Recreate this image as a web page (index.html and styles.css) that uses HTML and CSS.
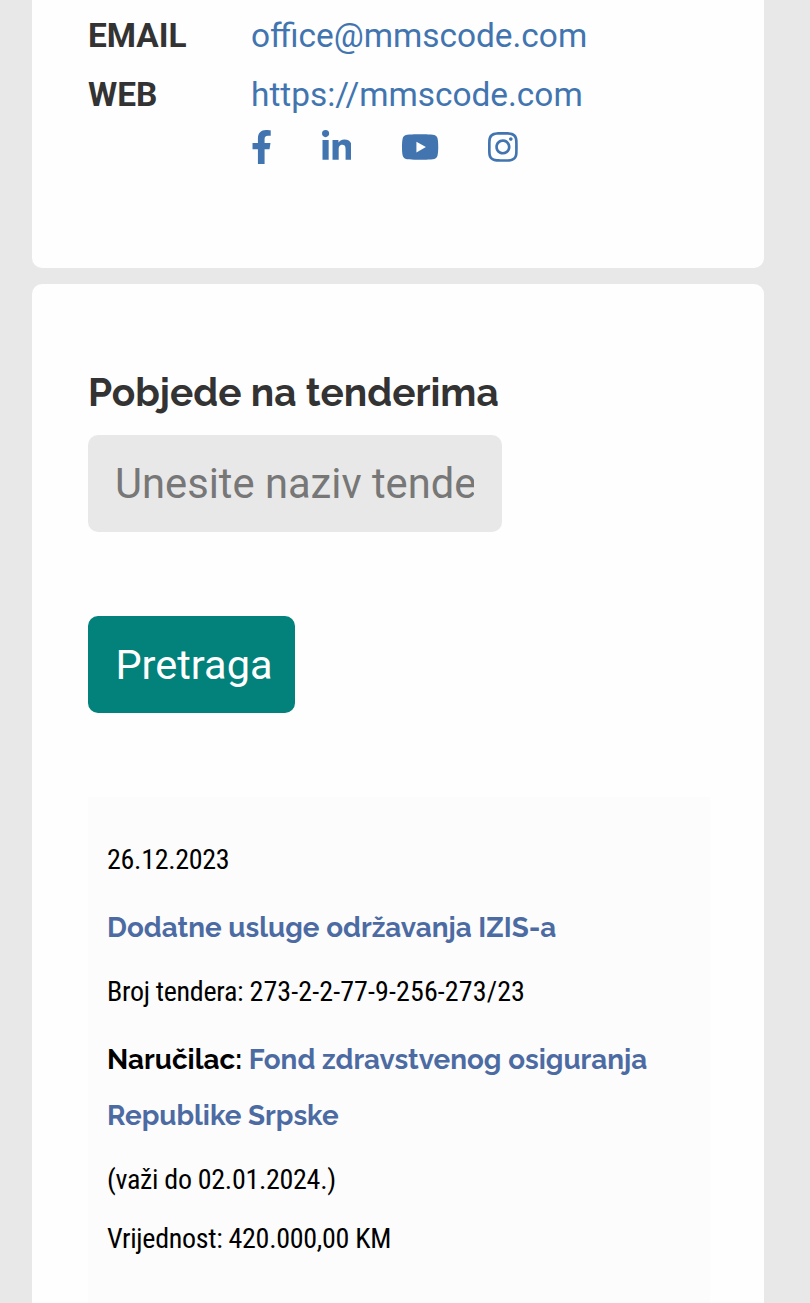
FILE: index.html
```
<!DOCTYPE html>
<html lang="bs">
<head>
    <meta charset="UTF-8">
    <meta name="viewport" content="width=device-width, initial-scale=1.0">
    <title>Pobjede na tenderima</title>
    <link rel="stylesheet" href="styles.css">
</head>
<body>
    <div class="card contact">
        <div class="row">
            <div class="label">EMAIL</div>
            <a href="mailto:office@mmscode.com">office@mmscode.com</a>
        </div>
        <div class="row">
            <div class="label">WEB</div>
            <a href="https://mmscode.com">https://mmscode.com</a>
        </div>
        <div class="social">
            <a href="#" aria-label="Facebook"><svg viewBox="0 0 320 512"><path d="M279.14 288l14.22-92.66h-88.91v-60.13c0-25.35 12.42-50.06 52.24-50.06h40.42V6.26S260.43 0 225.36 0c-73.22 0-121.08 44.38-121.08 124.72v70.62H22.89V288h81.39v224h100.17V288z"/></svg></a>
            <a href="#" aria-label="LinkedIn"><svg viewBox="0 0 448 512"><path d="M100.28 448H7.4V148.9h92.88zM53.79 108.1C24.09 108.1 0 83.5 0 53.8a53.79 53.79 0 0 1 107.58 0c0 29.7-24.1 54.3-53.79 54.3zM447.9 448h-92.68V302.4c0-34.7-.7-79.2-48.29-79.2-48.29 0-55.69 37.7-55.69 76.7V448h-92.78V148.9h89.08v40.8h1.3c12.4-23.5 42.69-48.3 87.88-48.3 94 0 111.28 61.9 111.28 142.3V448z"/></svg></a>
            <a href="#" aria-label="YouTube"><svg viewBox="0 0 576 512"><path d="M549.655 124.083c-6.281-23.65-24.787-42.276-48.284-48.597C458.781 64 288 64 288 64S117.22 64 74.629 75.486c-23.497 6.322-42.003 24.947-48.284 48.597-11.412 42.867-11.412 132.305-11.412 132.305s0 89.438 11.412 132.305c6.281 23.65 24.787 41.5 48.284 47.821C117.22 448 288 448 288 448s170.78 0 213.371-11.486c23.497-6.321 42.003-24.171 48.284-47.821 11.412-42.867 11.412-132.305 11.412-132.305s0-89.438-11.412-132.305zm-317.51 213.508V175.185l142.739 81.205-142.739 81.201z"/></svg></a>
            <a href="#" aria-label="Instagram"><svg viewBox="0 0 448 512"><path d="M224.1 141c-63.6 0-114.9 51.3-114.9 114.9s51.3 114.9 114.9 114.9S339 319.5 339 255.9 287.7 141 224.1 141zm0 189.6c-41.1 0-74.7-33.5-74.7-74.7s33.5-74.7 74.7-74.7 74.7 33.5 74.7 74.7-33.6 74.7-74.7 74.7zm146.4-194.3c0 14.9-12 26.8-26.8 26.8-14.9 0-26.8-12-26.8-26.8s12-26.8 26.8-26.8 26.8 12 26.8 26.8zm76.1 27.2c-1.7-35.9-9.9-67.7-36.2-93.9-26.2-26.2-58-34.4-93.9-36.2-37-2.1-147.9-2.1-184.9 0-35.8 1.7-67.6 9.9-93.9 36.1s-34.4 58-36.2 93.9c-2.1 37-2.1 147.9 0 184.9 1.7 35.9 9.9 67.7 36.2 93.9s58 34.4 93.9 36.2c37 2.1 147.9 2.1 184.9 0 35.9-1.7 67.7-9.9 93.9-36.2 26.2-26.2 34.4-58 36.2-93.9 2.1-37 2.1-147.8 0-184.8zM398.8 388c-7.8 19.6-22.9 34.7-42.6 42.6-29.5 11.7-99.5 9-132.1 9s-102.7 2.6-132.1-9c-19.6-7.8-34.7-22.9-42.6-42.6-11.7-29.5-9-99.5-9-132.1s-2.6-102.7 9-132.1c7.8-19.6 22.9-34.7 42.6-42.6 29.5-11.7 99.5-9 132.1-9s102.7-2.6 132.1 9c19.6 7.8 34.7 22.9 42.6 42.6 11.7 29.5 9 99.5 9 132.1s2.7 102.7-9 132.1z"/></svg></a>
        </div>
    </div>

    <div class="card tenders">
        <h2>Pobjede na tenderima</h2>
        <input type="text" class="search" placeholder="Unesite naziv tendera">
        <button class="btn">Pretraga</button>

        <div class="tender">
            <p>26.12.2023</p>
            <h3><a href="#">Dodatne usluge održavanja IZIS-a</a></h3>
            <p>Broj tendera: <span class="number">273-2-2-77-9-256-273/23</span></p>
            <h3>Naručilac: <a href="#">Fond zdravstvenog osiguranja</a><br><a href="#">Republike Srpske</a></h3>
            <p>(važi do 02.01.2024.)</p>
            <p>Vrijednost: 420.000,00 KM</p>
        </div>
    </div>
</body>
</html>
```

FILE: styles.css
```
* {
    box-sizing: border-box;
}
body {
    margin: 0;
    padding: 0 46px 0 32px;
    background-color: #e8e8e8;
    font-family: Roboto, sans-serif;
    color: #333;
}
a {
    color: #4275b0;
    text-decoration: none;
}
.card {
    background: #fefefe;
    border-radius: 10px;
    padding: 0 56px;
}
.contact {
    height: 267.5px;
    padding-top: 6px;
    border-radius: 0 0 10px 10px;
    margin-bottom: 16px;
}
.row {
    display: flex;
    font-size: 33.4px;
    line-height: 59px;
}
.label {
    width: 163px;
    font-weight: bold;
}
.social {
    display: flex;
    align-items: center;
    margin-left: 163px;
    height: 46px;
}
.social a {
    display: flex;
    margin-right: 49.3px;
}
.social svg {
    height: 34px;
    fill: #4275b0;
}
.tenders {
    height: 1019.5px;
    padding-top: 84.5px;
    border-radius: 10px 10px 0 0;
}
h2, h3 {
    font-family: Raleway, Lato, sans-serif;
    font-weight: bold;
    margin: 0;
}
h2 {
    font-size: 38.8px;
    line-height: 50px;
    margin-bottom: 17px;
}
.search {
    display: block;
    width: 414px;
    height: 97px;
    padding: 0 28px 0 27px;
    border: none;
    border-radius: 10px;
    background: #e8e8e8;
    font: 41.7px Roboto, sans-serif;
}
.search::placeholder {
    color: #777;
}
.btn {
    display: block;
    width: 207px;
    height: 97px;
    margin: 84px 0;
    padding: 0 0 1px 5px;
    border: none;
    border-radius: 10px;
    background: #02827b;
    color: #fff;
    font: 41.5px Roboto, sans-serif;
}
.tender {
    height: 507px;
    margin-right: -2px;
    padding: 33px 20px 0 19px;
    background: #fcfcfc;
    color: #000;
}
.tender p {
    margin: 0;
    font-family: "Roboto Condensed", Roboto, sans-serif;
    font-stretch: 75%;
    font-size: 28px;
    line-height: 59px;
    letter-spacing: -0.3px;
}
.tender .number {
    letter-spacing: 0.1px;
}
.tender h3 {
    font-size: 27.8px;
    line-height: 56px;
    margin: 11px 0 6px;
}
.tender h3 a {
    color: #4d6ba3;
}
```
